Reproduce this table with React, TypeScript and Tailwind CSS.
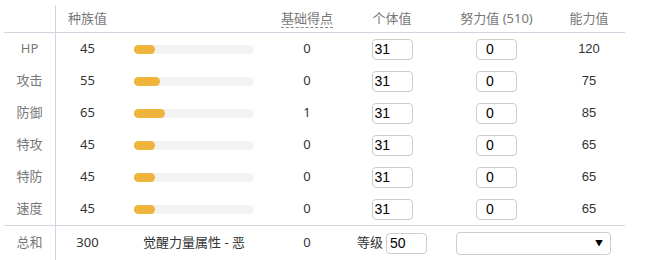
import React from "react";

const stats = [
  { label: "HP", base: 45, pt: 0, iv: 31, ev: 0, val: 120 },
  { label: "攻击", base: 55, pt: 0, iv: 31, ev: 0, val: 75 },
  { label: "防御", base: 65, pt: 1, iv: 31, ev: 0, val: 85 },
  { label: "特攻", base: 45, pt: 0, iv: 31, ev: 0, val: 65 },
  { label: "特防", base: 45, pt: 0, iv: 31, ev: 0, val: 65 },
  { label: "速度", base: 45, pt: 0, iv: 31, ev: 0, val: 65 },
];

const font = { fontFamily: '"Noto Sans", "Noto Sans CJK SC", sans-serif' };

const App = () => {
  return (
    <div className="w-[645px] h-[260px] bg-white pl-[4px] pt-[5px] text-[13px]" style={font}>
      <div className="w-[621px]">
        {/* Header */}
        <div className="flex h-[28px] border-b border-[#cfd6e0] text-[#777]">
          <div className="w-[52px] border-r border-[#cfd6e0]" />
          <div className="w-[63px] flex items-center justify-center">种族值</div>
          <div className="w-[150px]" />
          <div className="w-[76px] flex items-center justify-center">
            <span className="border-b border-dashed border-[#888] leading-[17px]">基础得点</span>
          </div>
          <div className="w-[94px] flex items-center justify-center">个体值</div>
          <div className="w-[115px] flex items-center justify-center">努力值 (510)</div>
          <div className="w-[70px] flex items-center justify-center">能力值</div>
        </div>

        {/* Rows */}
        {stats.map((s) => (
          <div key={s.label} className="flex h-[32px]">
            <div className="w-[52px] border-r border-[#cfd6e0] flex items-center justify-center text-[#777]">
              {s.label}
            </div>
            <div className="w-[63px] flex items-center justify-center text-[#333]">{s.base}</div>
            <div className="w-[150px] flex items-center justify-center">
              <div className="w-[120px] h-[9px] rounded-full bg-[#f3f3f3]">
                <div
                  className="h-full rounded-full bg-[#f0b33b]"
                  style={{ width: `${(s.base / 255) * 120}px` }}
                />
              </div>
            </div>
            <div className="w-[76px] flex items-center justify-center text-[#333]">{s.pt}</div>
            <div className="w-[94px] flex items-center justify-center">
              <div className="w-[41px] h-[21px] border border-[#cccccc] rounded-[4px] pl-[2px] flex items-center text-[14px] text-black font-['Liberation_Sans',sans-serif]">
                {s.iv}
              </div>
            </div>
            <div className="w-[115px] flex items-center justify-center">
              <div className="w-[41px] h-[21px] border border-[#cccccc] rounded-[4px] pl-[9px] flex items-center text-[14px] text-black font-['Liberation_Sans',sans-serif]">
                {s.ev}
              </div>
            </div>
            <div className="w-[70px] flex items-center justify-center text-[#333] text-[13px] font-['Liberation_Sans',sans-serif]">
              {s.val}
            </div>
          </div>
        ))}

        {/* Footer */}
        <div className="flex h-[35px] border-t border-[#cfd6e0]">
          <div className="w-[52px] border-r border-[#cfd6e0] flex items-center justify-center text-[#777]">
            总和
          </div>
          <div className="w-[63px] flex items-center justify-center text-[#333]">300</div>
          <div className="w-[150px] flex items-center justify-center text-[#333]">觉醒力量属性 - 恶</div>
          <div className="w-[76px] flex items-center justify-center text-[#333]">0</div>
          <div className="w-[94px] flex items-center justify-center gap-[3px]">
            <span className="text-[#333]">等级</span>
            <div className="w-[41px] h-[21px] border border-[#cccccc] rounded-[4px] pl-[3px] flex items-center text-[14px] text-black font-['Liberation_Sans',sans-serif]">
              50
            </div>
          </div>
          <div className="w-[185px] flex items-center pl-[17px]">
            <div className="w-[155px] h-[23px] border border-[#cccccc] rounded-[4px] flex items-center justify-end pr-[7px] text-[8px] text-black">
              ▼
            </div>
          </div>
        </div>
      </div>
    </div>
  );
};

export default App;
